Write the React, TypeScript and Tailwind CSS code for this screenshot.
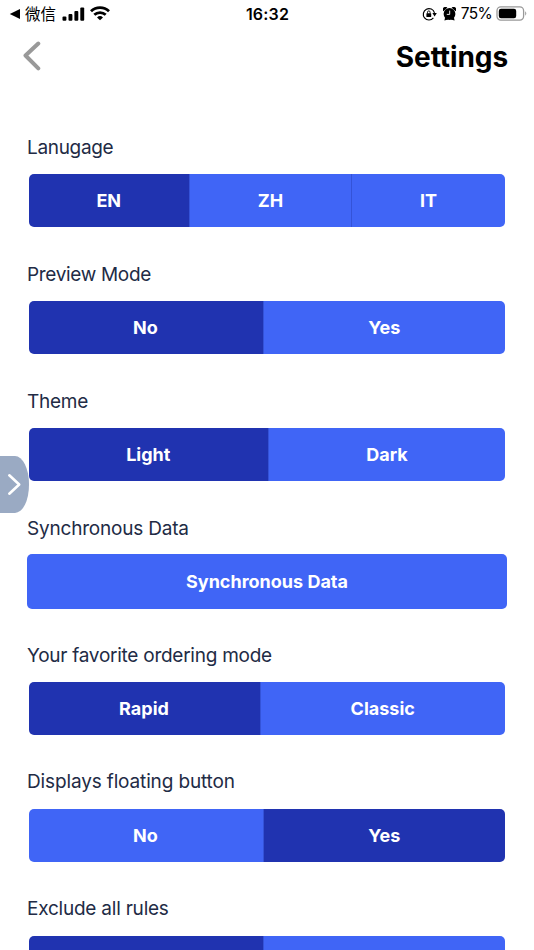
import clsx from "clsx";

type Option = { label?: string; width: string; active?: boolean };
type Setting = { title: string; spacing: string; options: Option[] };

const settings: Setting[] = [
    {
        title: "Lanugage",
        spacing: "tracking-[-0.32px]",
        options: [
            { label: "EN", width: "w-[161.5px]", active: true },
            { label: "ZH", width: "w-[162px]" },
            { label: "IT", width: "flex-1" },
        ],
    },
    {
        title: "Preview Mode",
        spacing: "tracking-[-0.32px]",
        options: [
            { label: "No", width: "w-[235px]", active: true },
            { label: "Yes", width: "flex-1" },
        ],
    },
    {
        title: "Theme",
        spacing: "tracking-[-0.25px]",
        options: [
            { label: "Light", width: "w-[240.5px]", active: true },
            { label: "Dark", width: "flex-1" },
        ],
    },
    { title: "Synchronous Data", spacing: "tracking-[-0.2px]", options: [] },
    {
        title: "Your favorite ordering mode",
        spacing: "tracking-[-0.26px]",
        options: [
            { label: "Rapid", width: "w-[232px]", active: true },
            { label: "Classic", width: "flex-1" },
        ],
    },
    {
        title: "Displays floating button",
        spacing: "tracking-[-0.14px]",
        options: [
            { label: "No", width: "w-[235px]" },
            { label: "Yes", width: "flex-1", active: true },
        ],
    },
    {
        title: "Exclude all rules",
        spacing: "tracking-[-0.22px]",
        options: [
            { width: "w-[235px]", active: true },
            { width: "flex-1" },
        ],
    },
];

function StatusBar() {
    return (
        <div className="grid h-7 grid-cols-[1fr_auto_1fr] items-center pl-[9px] pr-[7px] text-black">
            <div className="flex items-center">
                <svg width="12" height="12" viewBox="0 0 12 12">
                    <path d="M0.8 6 11 1v10z" />
                </svg>
                <span className="ml-[4px] mt-[2px] text-[15.5px] leading-6">微信</span>
                <svg className="ml-[6px] -mt-[1px]" width="23" height="14" viewBox="0 0 23 14">
                    <rect x="0.5" y="9.5" width="3.9" height="4.2" rx="1" />
                    <rect x="6.5" y="7" width="3.9" height="6.7" rx="1" />
                    <rect x="12.4" y="4" width="3.9" height="9.7" rx="1" />
                    <rect x="18.3" y="0.4" width="3.9" height="13.3" rx="1" />
                </svg>
                <svg className="ml-[5px] -mt-[2px]" width="20" height="15" viewBox="0 0 20 15" fill="none" stroke="#000" strokeWidth="2.8">
                    <path d="M1 5.2a13 13 0 0 1 18 0" />
                    <path d="M4.3 8.8a8.3 8.3 0 0 1 11.4 0" />
                    <path d="M10 14.3 7 11.5a4.4 4.4 0 0 1 6 0z" fill="#000" stroke="none" />
                </svg>
            </div>
            <span className="-ml-[1px] text-[16px] font-semibold leading-6 tracking-[0.2px]">16:32</span>
            <div className="flex items-center justify-end">
                <svg width="15" height="14" viewBox="0 0 15 14">
                    <path d="M11.4 10.9A5.7 5.7 0 1 1 12.5 5.8" fill="none" stroke="#000" strokeWidth="1.2" />
                    <path d="M10.4 6h4.4l-2.2 3.4z" />
                    <rect x="4.4" y="6.2" width="4.8" height="3.7" rx="0.5" />
                    <path d="M5.5 6.5V5.2a1.3 1.3 0 0 1 2.6 0v1.3" fill="none" stroke="#000" strokeWidth="0.9" />
                </svg>
                <svg className="ml-[6px]" width="13" height="14" viewBox="0 0 13 14">
                    <circle cx="6.5" cy="7" r="5.9" />
                    <path d="M0.4 4.2a2.5 2.5 0 0 1 3.9-3.4zM12.6 4.2a2.5 2.5 0 0 0-3.9-3.4zM1.4 13.4 2.2 10l3 2.4zM11.6 13.4l-.8-3.4-3 2.4z" />
                    <path d="M6.7 3.6v3.8H3.8" fill="none" stroke="#fff" strokeWidth="0.9" />
                </svg>
                <span className="ml-[5px] text-[15.5px] leading-6 tracking-[-0.7px]">75%</span>
                <svg className="ml-[4px] -mr-[1px] -mt-[1px]" width="32" height="16" viewBox="0 0 32 16">
                    <rect x="1" y="0.9" width="26.6" height="13.2" rx="3.8" fill="#fff" stroke="#999" strokeWidth="1.3" />
                    <rect x="2.8" y="2.7" width="17.4" height="9.6" rx="2.2" />
                    <path d="M29.2 5.3q2.2 2.2 0 4.5z" fill="#999" />
                </svg>
            </div>
        </div>
    );
}

function ButtonGroup({ options }: { options: Option[] }) {
    return (
        <div className="ml-[1.5px] mr-[2px] flex h-[53px] overflow-hidden rounded-[5px]">
            {options.map((option, i) => (
                <button
                    key={i}
                    className={clsx(
                        "text-[18px] font-bold text-white",
                        option.width,
                        option.active ? "bg-[#2033b0]" : "bg-[#4065f6]",
                        i < options.length - 1 && "border-r border-[#3453d8]",
                    )}
                >
                    {option.label}
                </button>
            ))}
        </div>
    );
}

export default function App() {
    return (
        <div className="relative h-[950px] w-[534px] overflow-hidden bg-white font-['Inter','Noto_Sans_CJK_SC',sans-serif]">
            <StatusBar />
            <header className="flex h-[58px] items-center justify-between pl-[22px] pr-[26px]">
                <svg width="20" height="32" viewBox="0 0 20 32" fill="none" stroke="#999" strokeWidth="4" strokeLinecap="round" strokeLinejoin="round">
                    <path d="M16.3 2.5 3.5 14.5l12.8 12.8" />
                </svg>
                <h1 className="text-[28px] font-bold leading-8 tracking-[-0.1px] text-black">Settings</h1>
            </header>

            <main className="px-[27px] pt-[48px]">
                {settings.map((setting) => (
                    <section key={setting.title} className="h-[126.9px]">
                        <h2 className={clsx("h-[40.3px] whitespace-nowrap text-[19px] leading-7 text-[#222b45]", setting.spacing)}>
                            {setting.title}
                        </h2>
                        {setting.options.length > 0 ? (
                            <ButtonGroup options={setting.options} />
                        ) : (
                            <button className="-mt-[1px] h-[55px] w-full rounded-[5px] bg-[#4065f6] text-[18px] font-bold text-white">
                                Synchronous Data
                            </button>
                        )}
                    </section>
                ))}
            </main>

            {/* drawer handle floating over the left edge */}
            <button className="absolute left-0 top-[456px] flex h-[57px] w-[28.5px] items-center bg-[#9aaac3] pl-[7px] [border-radius:0_14px_14px_0/0_28px_28px_0]">
                <svg width="15" height="23" viewBox="0 0 15 23" fill="none" stroke="#fff" strokeWidth="2.6" strokeLinecap="round" strokeLinejoin="round">
                    <path d="M2.3 2.3 12.2 11.5 2.3 20.7" />
                </svg>
            </button>
        </div>
    );
}
